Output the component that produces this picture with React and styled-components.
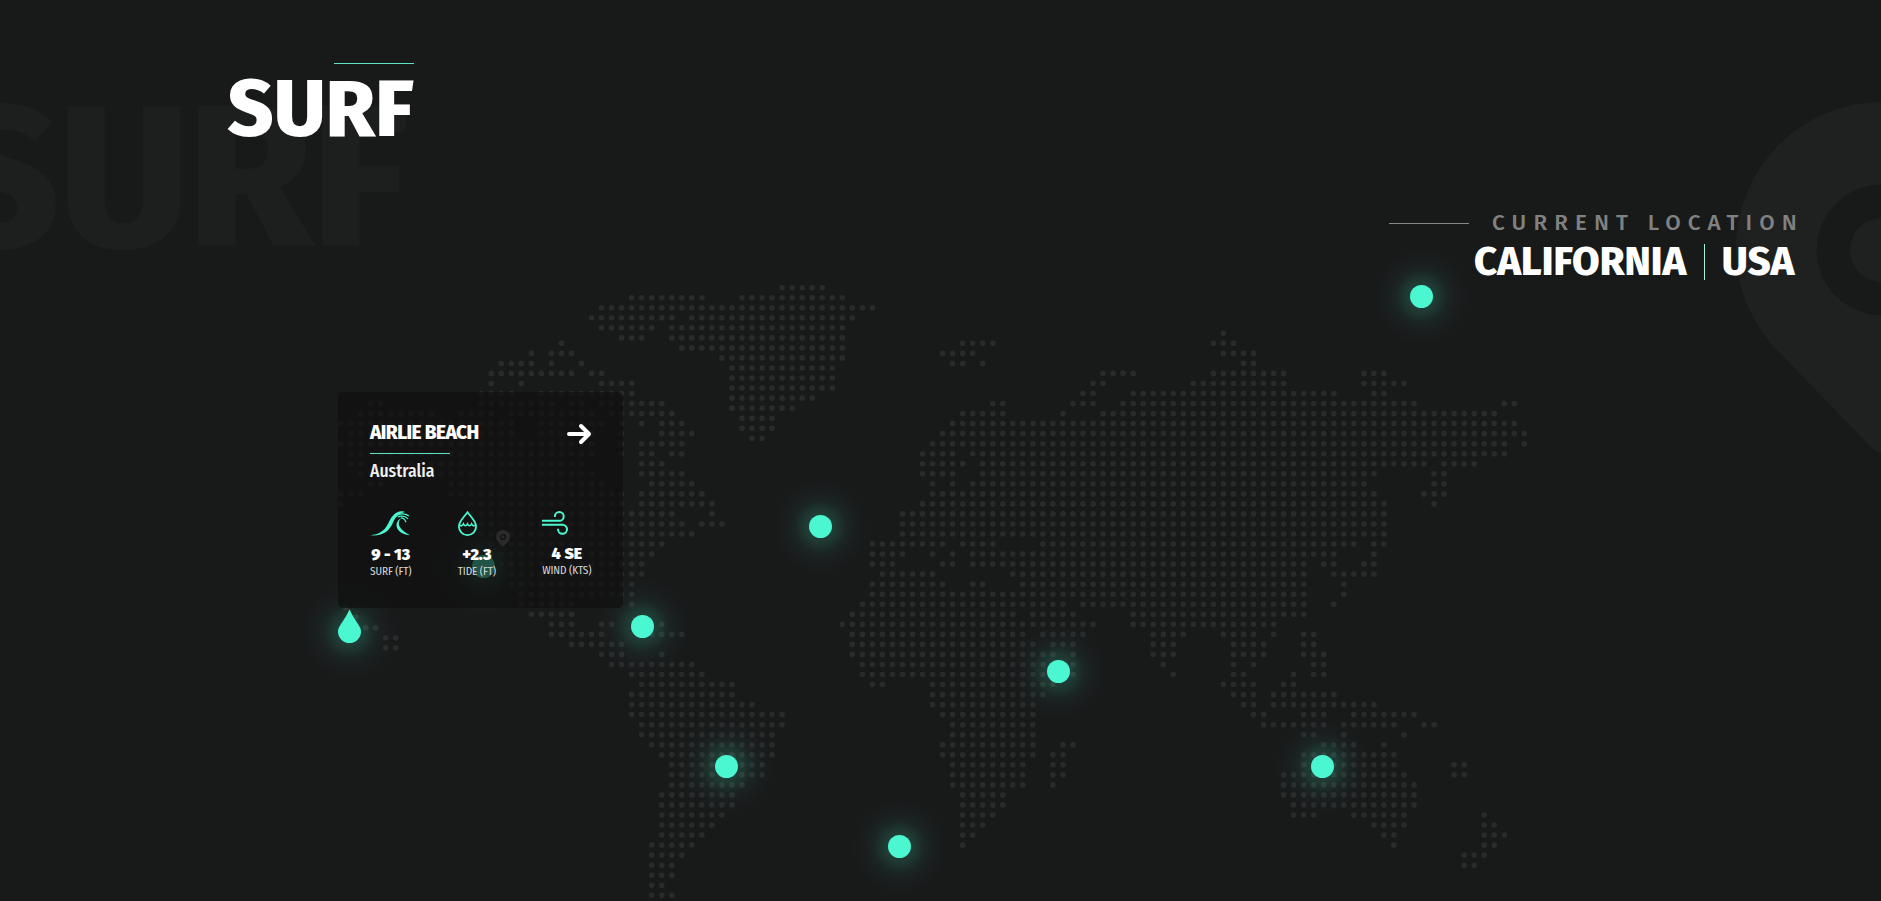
import React from "react";
import styled, { createGlobalStyle } from "styled-components";

const ACCENT = "#4af7d0";

const GlobalStyle = createGlobalStyle`
  *, *::before, *::after { box-sizing: border-box; }
  body {
    margin: 0;
    background: #181a19;
    color: #fff;
    font-family: "Fira Sans", "Open Sans", sans-serif;
  }
`;

/* ---------- dotted world map ---------- */

const STEP_X = 10.03;
const STEP_Y = 10.035;
const MAP_LEFT = 340.8;
const MAIN_TOP = 333.3;
const NORTH_TOP = 287.7;

// Each entry is one row; each run is "first-last" column.
const NORTH_ROWS = [
  "44-48",
  "29-36 40-50",
  "26-53",
  "25-33 35-51",
  "26-31 33-50",
  "28-30 33-50",
  "34-50",
  "38-50",
  "39-49",
  "39-49",
  "39-49",
  "39-47",
  "39-45",
  "40-43",
  "40-43",
  "41-42",
];

const MAIN_ROWS = [
  "88",
  "22 62-65 87-89",
  "19 21-23 60-63 88-91",
  "16-19 21 24 61-62 64 90-91",
  "15-23 25-26 76-79 87-94 102-104",
  "15 18 26-29 75-76 85-94 102-106",
  "14-17 20-29 74-75 79-99 103-104",
  "3-4 14-21 23-24 26-32 65-66 73-75 78-107 116-117",
  "2-9 12-15 17-25 27-33 62-66 72 76-115",
  "0-17 20-26 28 30 32-34 61-117",
  "1-17 20-25 28 32-35 60-118",
  "0-25 28 30-34 59-116 118",
  "1-25 28 30-31 33-34 58-61 63-116",
  "1-2 4-24 30-32 58-62 64-108 110-113",
  "2-5 8-25 30-34 58-61 64-103 109-110",
  "3-4 11-26 31-35 59 61 63-102 109-110",
  "0-2 11-28 30-36 59-103 108-110",
  "0 13-28 30-37 58-104 109",
  "13-33 37 56-104",
  "14-34 36-38 56-104",
  "14-35 56-104",
  "15-32 53-60 62-65 70-101 103-104",
  "15-31 53-56 59 61 63-99 103",
  "16-30 53-55 60-61 63-96 98-99 102-103",
  "17-30 54-59 67-96 99-103",
  "17-29 53-60 63-64 68-96 100",
  "18-29 53-96 100",
  "18-23 29 52-72 74-96 99",
  "19-23 51-67 69-73 79-96",
  "21-23 26-27 32 50-75 79-93",
  "21-26 31-34 51-68 70-74 81-84 88-91 93 96-97",
  "23-28 51-69 71-73 81-83 89-92 96-97",
  "26-28 32 51-71 73 81-83 89-92 96-98",
  "27-35 52-73 82 89 91 97-98",
  "29-36 52-73 83 89-90 95 97-98",
  "30-39 53-54 59-71 88-91 94-95",
  "29-39 59-70 89-91 93-99",
  "29-41 59-69 90-91 93-103",
  "29-44 60-69 91-92 96-98 101-107",
  "30-44 61-69 92-98 100-105 108-109",
  "30-43 61-69 96-97 100 106",
  "31-43 60-69 72-73 98-101 104",
  "32-43 60-69 71-72 96-105",
  "33-42 61-68 71-72 96-105 111-112",
  "33-42 61-68 71-72 94-106 111-112",
  "33-40 61-68 71 94-107",
  "32-39 62-66 94-107",
  "32-39 62-66 95-107",
  "32-38 62-65 95-97 101-106 114",
  "32-37 62-64 103-106 114-115",
  "32-36 62-63 104-105 114-116",
  "31-35 62 105 114-115",
  "31-34 112-114",
  "31-33 112-113",
  "31-33",
  "31-32",
  "31-33",
];

const HAWAII = [
  [345.7, 607.7],
  [355.7, 616.7],
  [365.7, 627.7],
  [375.7, 627.7],
  [385.7, 637.7],
  [395.7, 637.7],
  [385.7, 647.7],
  [395.7, 647.7],
];

function expand(rows, top) {
  const points = [];
  rows.forEach((row, r) => {
    row.split(" ").forEach((run) => {
      const [from, to = from] = run.split("-").map(Number);
      for (let c = from; c <= to; c += 1) {
        points.push([MAP_LEFT + c * STEP_X, top + r * STEP_Y]);
      }
    });
  });
  return points;
}

const DOT_PATH = [
  ...expand(NORTH_ROWS, NORTH_TOP),
  ...expand(MAIN_ROWS, MAIN_TOP),
  ...HAWAII,
]
  .map(([x, y]) => `M${(x - 2.8).toFixed(1)} ${y.toFixed(1)}a2.8 2.8 0 1 0 5.6 0a2.8 2.8 0 1 0-5.6 0`)
  .join("");

/* ---------- layout ---------- */

const Page = styled.main`
  position: relative;
  width: 1881px;
  height: 901px;
  overflow: hidden;
  background: #181a19;
`;

const Header = styled.header`
  position: relative;
  z-index: 2;
  display: flex;
  justify-content: space-between;
  align-items: flex-start;
  padding: 63px 76px 0 214px;
`;

const TitleBlock = styled.div`
  display: flex;
  flex-direction: column;
  align-items: flex-end;
  width: 200px;
`;

const Rule = styled.span`
  display: block;
  flex: none;
  width: 80px;
  height: 1px;
  background: ${(p) => p.$color || "#5ce3c2"};
`;

const Title = styled.h1`
  margin: 5px 0 0;
  font-size: 80px;
  line-height: 80px;
  font-weight: 800;
`;

const Watermark = styled.div`
  position: absolute;
  top: 79px;
  right: 1473px;
  font-size: 202px;
  line-height: 200px;
  font-weight: 800;
  letter-spacing: -1.5px;
  color: #1d1f1e;
  white-space: nowrap;
`;

const PinWatermark = styled.svg`
  position: absolute;
  top: 102px;
  left: 1735px;
`;

const LocationBlock = styled.section`
  width: 416px;
  padding-top: 148px;
`;

const Eyebrow = styled.div`
  display: flex;
  align-items: center;
  gap: 23px;
  font-size: 22.4px;
  line-height: 24px;
  font-weight: 500;
  letter-spacing: 7.1px;
  color: #808281;
  white-space: nowrap;
`;

const Place = styled.div`
  display: flex;
  align-items: center;
  margin: 3px 0 0 85px;
  font-size: 40px;
  line-height: 48px;
  font-weight: 800;
`;

const Divider = styled.span`
  width: 1px;
  height: 36px;
  margin: 0 17px 0 17.5px;
  background: #a9efe0;
`;

const MapCanvas = styled.div`
  position: absolute;
  inset: 0;
`;

const MapDots = styled.svg`
  position: absolute;
  inset: 0;
`;

const MarkerLayer = styled.div`
  position: absolute;
  inset: 0;
  z-index: 0;
`;

const Marker = styled.span`
  position: absolute;
  left: ${(p) => p.$x - 11.5}px;
  top: ${(p) => p.$y - 11.5}px;
  width: 23px;
  height: 23px;
  border-radius: 50%;
  background: ${(p) => (p.$hollow ? "none" : ACCENT)};

  &::before {
    content: "";
    position: absolute;
    inset: -41px;
    z-index: -1;
    border-radius: 50%;
    background: radial-gradient(
      circle,
      rgba(74, 247, 208, 0.19) 0,
      rgba(74, 247, 208, 0.17) 11px,
      rgba(74, 247, 208, 0.12) 18px,
      rgba(62, 190, 170, 0.07) 26px,
      rgba(50, 90, 110, 0.06) 35px,
      rgba(50, 60, 100, 0.03) 44px,
      rgba(50, 60, 100, 0) 52px
    );
  }
`;

const SmallPin = styled.svg`
  position: absolute;
  left: 496px;
  top: 530px;
`;

const DropMarker = styled.svg`
  position: absolute;
  left: 338px;
  top: 609px;
`;

const Card = styled.article`
  position: absolute;
  left: 338px;
  top: 392px;
  width: 285px;
  height: 216px;
  padding: 29px 31.5px 0 32px;
  border-radius: 5px;
  background: rgba(15, 15, 15, 0.7);
`;

const CardHead = styled.div`
  display: flex;
  justify-content: space-between;
  align-items: flex-start;
  height: 24px;
  margin-bottom: 8px;
`;

const CardTitle = styled.h2`
  margin: 0;
  font-size: 19.2px;
  line-height: 24px;
  font-weight: 800;
  letter-spacing: -0.6px;
`;

const Country = styled.p`
  margin: 8px 0 29px;
  font-family: "Fira Sans Condensed", "Fira Sans", sans-serif;
  font-size: 17.6px;
  line-height: 20px;
  font-weight: 500;
  color: #f0f0f0;
`;

const Stats = styled.div`
  display: flex;
  justify-content: space-between;
  align-items: flex-start;
`;

const Stat = styled.div`
  display: flex;
  flex-direction: column;
`;

const Value = styled.strong`
  margin-top: 9px;
  font-size: 16px;
  line-height: 20px;
  font-weight: 900;
  text-align: center;
`;

const Unit = styled.span`
  font-family: "Fira Sans Condensed", "Fira Sans", sans-serif;
  font-size: 11.2px;
  line-height: 13px;
  color: #d8d8d8;
  letter-spacing: -0.1px;
  white-space: nowrap;
`;

/* ---------- icons ---------- */

const Icon = styled.svg`
  display: block;
  overflow: visible;
`;

const ArrowGlyph = styled(Icon)`
  margin: 3px 0.5px 0 0;
`;

const ArrowIcon = () => (
  <ArrowGlyph width="24" height="20" viewBox="0 0 24 20" fill="none" stroke="#fff" strokeWidth="4" strokeLinecap="round" strokeLinejoin="round">
    <path d="M2 10H21M14 2L22 10L14 18" />
  </ArrowGlyph>
);

const WaveIcon = () => (
  <Icon width="40" height="25" viewBox="0 0 40 25" fill={ACCENT}>
    <path d="M0 24.3C9 23.4 14.5 20 18.2 12.5C21.5 5.5 25.5 .4 31.5 .3C33 .3 34 .6 35 1C30 2 26 5 23.2 11C19.5 19.8 14 25.3 0 24.3Z" />
    <path d="M31.5 7C26.5 9.5 25 14.5 28.2 19C31 22.5 35 24 40 24.3C34 21 30 17.5 29 14C28.3 11 29.3 9 31.5 7Z" />
    <path d="M28.5 3.6Q34 1.6 38.8 4.8" fill="none" stroke={ACCENT} strokeWidth="1.4" />
    <path d="M27.5 6Q34 3.6 38 7.8M31 6.9Q34.5 7 36 11.2" fill="none" stroke={ACCENT} strokeWidth="1.2" />
  </Icon>
);

const TideIcon = () => (
  <Icon width="19" height="25" viewBox="0 0 19 25" fill="none" stroke={ACCENT} strokeWidth="1.8">
    <path d="M9.5 1.2C6.5 5.5 .9 10.2 .9 15.5a8.6 8.6 0 0 0 17.2 0C18.1 10.2 12.5 5.5 9.5 1.2Z" />
    <path d="M1 13.5Q3.8 16.5 5.4 12.8Q7.5 16.8 9.5 12.8Q11.5 16.8 13.6 12.8Q15.2 16.5 18 13.5" strokeWidth="1.6" />
  </Icon>
);

const WindIcon = () => (
  <Icon width="26" height="24" viewBox="0 0 26 24" fill="none" stroke={ACCENT} strokeWidth="2">
    <path d="M0 9.8H17.3a4.4 4.4 0 1 0-4.4-4.4v.6M0 13.8H20.5a4.5 4.5 0 1 1-4.5 4.5v-.6" />
  </Icon>
);

/* ---------- data ---------- */

const MARKERS = [
  [1421.5, 296.5],
  [820.5, 526.5],
  [642.5, 626.5],
  [1058.5, 671.5],
  [726.5, 766.5],
  [1322.5, 766.5],
  [899.5, 846.5],
  [483.5, 566.5],
];

const STATS = [
  { icon: <WaveIcon />, value: "9 - 13", unit: "SURF (FT)" },
  { icon: <TideIcon />, value: "+2.3", unit: "TIDE (FT)" },
  { icon: <WindIcon />, value: "4 SE", unit: "WIND (KTS)" },
];

export default function App() {
  return (
    <>
      <GlobalStyle />
      <Page>
        <Watermark aria-hidden="true">SURF</Watermark>
        <PinWatermark width="294" height="354" viewBox="0 0 294 354" fill="#1f2120" fillRule="evenodd">
          <path d="M147 0A146 146 0 0 0 1 146C1 186 17 222 44 250L137 346Q147 356 157 346L250 250C277 222 293 186 293 146A146 146 0 0 0 147 0ZM147 82.5a65.3 65.3 0 1 1 0 130.6a65.3 65.3 0 1 1 0-130.6Z" />
          <circle cx="147" cy="148" r="32" />
        </PinWatermark>

        <MapCanvas>
          <MapDots width="1881" height="901" viewBox="0 0 1881 901">
            <path d={DOT_PATH} fill="#292b2a" />
          </MapDots>
          <MarkerLayer>
            {MARKERS.map(([x, y]) => (
              <Marker key={`${x}-${y}`} $x={x} $y={y} />
            ))}
            <Marker $x={349.5} $y={631.5} $hollow />
          </MarkerLayer>
          <SmallPin width="14" height="17" viewBox="0 0 14 17" fill="#6c6c6c" fillRule="evenodd">
            <path d="M7 0A7 7 0 0 0 0 7Q0 10 2.3 12L7 16.7L11.7 12Q14 10 14 7A7 7 0 0 0 7 0ZM7 3.8a3.2 3.2 0 1 1 0 6.4a3.2 3.2 0 1 1 0-6.4Z" />
            <circle cx="7" cy="7" r="1.5" />
          </SmallPin>
          <DropMarker width="23" height="34" viewBox="0 0 23 34" fill={ACCENT}>
            <path d="M11.5 .3C9.5 5.5 6 10.5 3 15C1.2 17.6 0 19.8 0 22.5a11.5 11.5 0 0 0 23 0C23 19.8 21.8 17.6 20 15C17 10.5 13.5 5.5 11.5 .3Z" />
          </DropMarker>
          <Card>
            <CardHead>
              <CardTitle>AIRLIE BEACH</CardTitle>
              <ArrowIcon />
            </CardHead>
            <Rule />
            <Country>Australia</Country>
            <Stats>
              {STATS.map((s) => (
                <Stat key={s.unit}>
                  {s.icon}
                  <Value>{s.value}</Value>
                  <Unit>{s.unit}</Unit>
                </Stat>
              ))}
            </Stats>
          </Card>
        </MapCanvas>

        <Header>
          <TitleBlock>
            <Rule />
            <Title>SURF</Title>
          </TitleBlock>
          <LocationBlock>
            <Eyebrow>
              <Rule $color="#858786" />
              CURRENT LOCATION
            </Eyebrow>
            <Place>
              CALIFORNIA
              <Divider />
              USA
            </Place>
          </LocationBlock>
        </Header>
      </Page>
    </>
  );
}
